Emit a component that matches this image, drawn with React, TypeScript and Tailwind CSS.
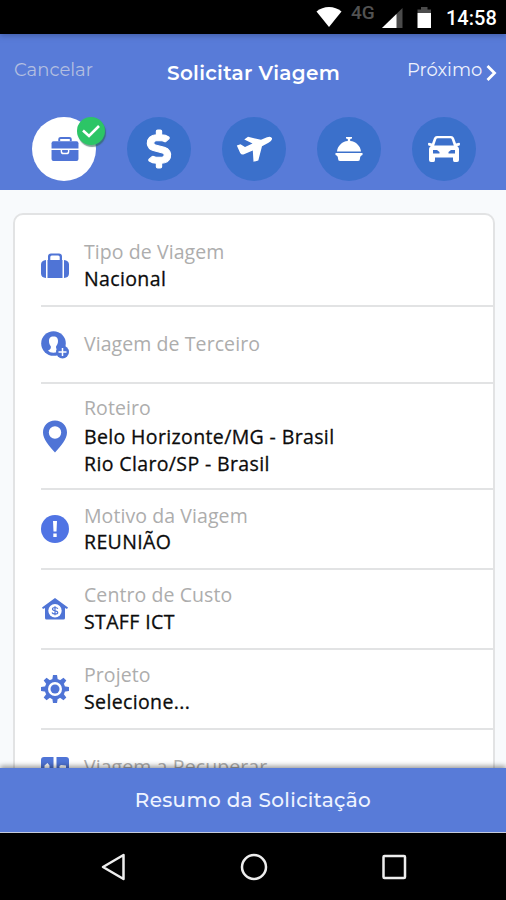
import type { ReactNode } from "react";
import { FaDollarSign } from "react-icons/fa";

const BLUE = "#4f74d6";

function StatusBar() {
  return (
    <div className="relative z-10 flex h-[34px] shrink-0 items-start bg-black shadow-[0_2px_5px_rgba(50,70,130,0.5)]">
      <svg className="mt-[7px] ml-[316px] h-5 w-[26px]" viewBox="0 0 26 20" fill="#fff">
        <path d="M13 20 0.5 4.5C4 1.5 8.300 0 13 0s9 1.500 12.500 4.500z" />
      </svg>
      <span className="mt-[3px] ml-[9px] w-[25px] font-['Roboto',sans-serif] text-[19px] leading-5 font-medium text-[#525252]">4G</span>
      <svg className="mt-[8px] ml-[6px] h-5 w-[21px]" viewBox="0 0 21 20">
        <path d="M0 20 20.500 0v20z" fill="#4b4b4b" />
        <path d="M0 20 14.500 6v14z" fill="#fff" />
      </svg>
      <svg className="mt-[7px] ml-[14px] h-[21px] w-[15px]" viewBox="0 0 15 21">
        <path d="M0.500 6V2.500H4V0h6.500v2.500H14V6z" fill="#4b4b4b" />
        <path d="M0.500 6H14v15H0.500z" fill="#fff" />
      </svg>
      <span className="mt-[8px] ml-[14px] font-['Roboto',sans-serif] text-[20px] leading-5 font-medium whitespace-nowrap text-white">14:58</span>
    </div>
  );
}

function Step({ children, active = false }: { children: ReactNode; active?: boolean }) {
  return (
    <div className={`relative flex size-16 items-center justify-center rounded-full ${active ? "bg-white" : "bg-[#3b70cb] text-white"}`}>
      {children}
      {active && (
        <span className="absolute top-0 left-[45px] flex size-7 items-center justify-center rounded-full bg-[#2cc566] shadow-[1px_2px_1px_rgba(40,100,80,0.6)]">
          <svg className="h-[13px] w-[18px]" viewBox="0 0 18 13" fill="none" stroke="#fff" strokeWidth="2.600">
            <path d="m1 5.500 6 5.500L17 1" />
          </svg>
        </span>
      )}
    </div>
  );
}

function Briefcase() {
  return (
    <svg className="ml-[2px] h-[25px] w-7" viewBox="0 0 28 26" fill={BLUE}>
      <path d="M8 4.500V2.200Q8 1 9.500 1h9Q20 1 20 2.200v2.300" fill="none" stroke={BLUE} strokeWidth="2" />
      <path d="M2 4.500h24q2 0 2 2V12H0V6.500q0-2 2-2z" />
      <path d="M0 13.500h9.500v1.500q0 3 3 3h3q3 0 3-3v-1.500H28V23q0 2-2 2H2q-2 0-2-2z" />
      <path d="M11 13.500h6v1.500q0 1.500-1.500 1.500h-3q-1.500 0-1.500-1.500z" />
    </svg>
  );
}

function Plane() {
  return (
    <svg className="h-7 w-9" viewBox="0 0 36 28" fill="#fff">
      <path d="M.8 10.500 4.500 9.300 9 12l7.500-3.500L8.300 4.600 12 1.800 25 4.800l6-2.600q4-1.500 5 1 .5 2.300-3.500 4.600L26 11.300l-3.700 14.200-4.800 1.300-.7-11.200L8 19.300q-2.500.8-3.800-1.300z" />
    </svg>
  );
}

function Cloche() {
  return (
    <svg className="h-6 w-7" viewBox="0 0 28 24" fill="#fff">
      <path d="M11 0h6v1.500L15.200 2v2C21 4.500 25.500 9 26 14.500H2C2.500 9 7 4.500 12.800 4V2L11 1.500z" />
      <path d="M.5 16h27v2q-2.500.5-2.500 3.500 0 2.500-2 2.500H5q-2 0-2-2.500Q3 18.500.5 18z" />
    </svg>
  );
}

function Car() {
  return (
    <svg className="h-[26px] w-8" viewBox="0 0 32 26" fill="#fff">
      <path
        fillRule="evenodd"
        d="M9 0h14q2.200 0 3 2l2 5.500 3-.7q1 0 1 1.200 0 1.500-1 1.700l-1.800.4Q31 11.500 31 13v11q0 2-2 2h-2.500q-1.500 0-1.500-2v-2.500H7V24q0 2-1.500 2H3q-2 0-2-2V13q0-1.500 1.800-2.900L1 9.700Q0 9.500 0 8q0-1.200 1-1.200l3 .7L6 2q.8-2 3-2zM9.800 2.300Q8.600 2.300 8.200 3.400L6.200 9.500h19.600L23.800 3.400q-.4-1.100-1.600-1.100zM5 14v3.500h6.500V16L9 14zM27 14v3.500h-6.500V16l2.500-2z"
      />
    </svg>
  );
}

function SuitcaseIcon() {
  return (
    <svg className="mt-3 h-[26px] w-7" viewBox="0 0 28 26" fill={BLUE}>
      <path d="M5 7v18Q0 24.500 0 20.500v-9Q0 7.500 5 7zM23 7v18q5-.5 5-4.500v-9Q28 7.500 23 7z" />
      <path fillRule="evenodd" d="M7 7V3.500Q7 .5 10 .5h8q3 0 3 3V7h.5v18h-15V7zM9.300 7h9.400V4q0-1.500-1.500-1.500h-6.400Q9.300 2.500 9.300 4z" />
    </svg>
  );
}

function PersonAddIcon() {
  return (
    <svg className="h-7 w-7" viewBox="0 0 28 28">
      <circle cx="12.500" cy="12.500" r="12.300" fill={BLUE} />
      <path d="M12.500 5.500c-3.500 0-4.500 2-4.500 4.500s.7 4 1.800 5.200c.3 2.300-.2 3-2.800 4.300 1.500 1.500 3 2.200 5.500 2.200s4.200-.7 5.200-2.200c-2.300-1.300-2.900-2-2.600-4.300C16.200 14 17 12.500 17 10c0-2.500-1-4.500-4.500-4.500z" fill="#fff" />
      <circle cx="21.500" cy="21" r="6.500" fill={BLUE} />
      <path d="M21.500 17v8M17.500 21h8" stroke="#fff" strokeWidth="1.500" />
    </svg>
  );
}

function PinIcon() {
  return (
    <svg className="h-[33px] w-[26px]" viewBox="0 0 26 33" fill={BLUE}>
      <path fillRule="evenodd" d="M13 .5C6 .5 1 5.500 1 12.500 1 19 7 26 13 32.500 19 26 25 19 25 12.500 25 5.500 20 .5 13 .5zM13 6.300a6.200 6.200 0 1 1 0 12.400 6.200 6.200 0 0 1 0-12.400z" />
    </svg>
  );
}

function AlertIcon() {
  return (
    <svg className="size-7" viewBox="0 0 28 28">
      <circle cx="14" cy="14" r="14" fill="#5074e4" />
      <path d="M12 6h4l-.5 10.500h-3zM12.300 18.500h3.400V22h-3.400z" fill="#fff" />
    </svg>
  );
}

function HouseMoneyIcon() {
  return (
    <svg className="h-[22px] w-[26px]" viewBox="0 0 26 22">
      <path d="M13 0 26 9.500 25 11l-2-1V20q0 1.500-1.500 1.500h-17Q3 21.500 3 20V10l-2 1-1-1.500z" fill={BLUE} />
      <circle cx="13" cy="12.800" r="6.700" fill="#fff" />
      <path d="M15.800 10.800c-.4-1-1.400-1.300-2.800-1.300s-2.500.5-2.500 1.600c0 2.400 5.300 1 5.300 3.300 0 1.200-1.300 1.600-2.800 1.600-1.600 0-2.600-.5-3-1.500M13 8.300v9" fill="none" stroke={BLUE} strokeWidth="1.200" />
    </svg>
  );
}

function GearIcon() {
  return (
    <svg className="size-7" viewBox="-14 -14 28 28" fill={BLUE}>
      {[0, 45, 90, 135].map((a) => (
        <path key={a} transform={`rotate(${a})`} d="M-2-14h4L2.800-9v18L2 14h-4L-2.800 9V-9z" />
      ))}
      <circle r="10.300" />
      <circle r="7" fill="#fff" />
      <circle r="4.500" />
    </svg>
  );
}

function RecoverIcon() {
  return (
    <svg className="mt-[3px] size-7" viewBox="0 0 28 28" fill={BLUE}>
      <path d="M3 0h9.500v13H8.500V8.500L6.500 6 3.500 8.500v4.500H0V3q0-3 3-3zM15.500 0H25q3 0 3 3v10h-3V8.500l-5-.5-1.500 1v4h-3zM0 15.500h12.500V28H3q-3 0-3-3zM15.500 15.500H28V25q0 3-3 3h-9.500z" />
    </svg>
  );
}

interface RowProps {
  icon: ReactNode;
  label: string;
  values?: string[];
  height: string;
  textClass: string;
  labelClass?: string;
}

function Row({ icon, label, values = [], height, textClass, labelClass = "h-[27px]" }: RowProps) {
  return (
    <div className={`ml-[26px] flex shrink-0 items-start border-b-2 border-[#e2e3e4] ${height}`}>
      <div className="flex w-7 shrink-0 items-center justify-center self-center">{icon}</div>
      <div className={`ml-[15px] font-['Open_Sans',sans-serif] text-[19.500px] leading-[27px] whitespace-nowrap ${textClass}`}>
        <div className={`tracking-[0.080px] text-[#adadad] ${labelClass}`}>{label}</div>
        {values.map((v) => (
          <div key={v} className="tracking-[0.370px] text-[#0c0c0c] [-webkit-text-stroke:0.300px_#0c0c0c]">{v}</div>
        ))}
      </div>
    </div>
  );
}

export default function App() {
  return (
    <div className="flex h-[900px] w-[506px] flex-col overflow-hidden bg-[#f8fafc]">
      <StatusBar />
      <header className="h-[156px] shrink-0 bg-[#587bd8] font-['Montserrat','Inter',sans-serif] text-white">
        <div className="flex h-[83px] items-start pl-[14px] whitespace-nowrap">
          <span className="mt-[24px] w-[153px] shrink-0 text-[18px] leading-6 text-[#b3bfe0]">Cancelar</span>
          <span className="mt-[27px] w-[240px] shrink-0 text-[20px] leading-6 font-semibold tracking-[0.300px]">Solicitar Viagem</span>
          <span className="mt-[24px] flex w-[90px] shrink-0 items-start text-[18px] leading-6 text-[#eef2fd]">
            <span className="w-[79px]">Próximo</span>
            <svg className="mt-[7px] h-4 w-[11px] shrink-0" viewBox="0 0 11 16" fill="none" stroke="#fff" strokeWidth="2.800">
              <path d="m1.500 1 7 7-7 7" />
            </svg>
          </span>
        </div>
        <div className="flex justify-between pr-[30px] pl-8">
          <Step active><Briefcase /></Step>
          <Step><FaDollarSign className="size-[38px] scale-x-110 overflow-visible stroke-white stroke-[14px]" /></Step>
          <Step><Plane /></Step>
          <Step><Cloche /></Step>
          <Step><Car /></Step>
        </div>
      </header>
      <main className="h-[578px] shrink-0 overflow-hidden pt-[23px] pl-[13px]">
        <div className="flex h-[640px] w-[482px] flex-col rounded-[10px] border-2 border-[#e2e3e4] bg-white">
          <Row icon={<SuitcaseIcon />} label="Tipo de Viagem" values={["Nacional"]} height="h-[92px]" textClass="pt-[23px]" />
          <Row icon={<PersonAddIcon />} label="Viagem de Terceiro" height="h-[77px]" textClass="pt-[23px]" />
          <Row icon={<PinIcon />} label="Roteiro" values={["Belo Horizonte/MG - Brasil", "Rio Claro/SP - Brasil"]} height="h-[106px]" textClass="pt-[10px]" labelClass="h-[29px]" />
          <Row icon={<AlertIcon />} label="Motivo da Viagem" values={["REUNIÃO"]} height="h-20" textClass="pt-3" labelClass="h-[26px]" />
          <Row icon={<HouseMoneyIcon />} label="Centro de Custo" values={["STAFF ICT"]} height="h-20" textClass="pt-[11px]" />
          <Row icon={<GearIcon />} label="Projeto" values={["Selecione..."]} height="h-20" textClass="pt-[11px]" />
          <Row icon={<RecoverIcon />} label="Viagem a Recuperar" height="h-20" textClass="pt-[23px]" />
        </div>
      </main>
      <button className="z-10 flex h-[65px] shrink-0 items-center justify-center border-b border-[#c5cbdc] bg-[#587bd8] font-['Montserrat','Inter',sans-serif] text-[20px] font-medium tracking-[0.320px] whitespace-nowrap text-[#eef3ff] shadow-[0_-2px_5px_rgba(0,0,0,0.4)]">
        Resumo da Solicitação
      </button>
      <nav className="z-10 flex grow items-start justify-between bg-black pt-[20px] pr-[98px] pl-[99px]">
        <svg className="size-7" viewBox="0 0 28 28" fill="none" stroke="#eee" strokeWidth="2.500">
          <path d="M24.500 2v24L4 14z" strokeLinejoin="round" />
        </svg>
        <svg className="size-7" viewBox="0 0 28 28" fill="none" stroke="#eee" strokeWidth="2.500">
          <circle cx="14" cy="14" r="12" />
        </svg>
        <svg className="size-7" viewBox="0 0 28 28" fill="none" stroke="#eee" strokeWidth="2.500">
          <rect x="3.500" y="3" width="21.500" height="22" rx="1" />
        </svg>
      </nav>
    </div>
  );
}
